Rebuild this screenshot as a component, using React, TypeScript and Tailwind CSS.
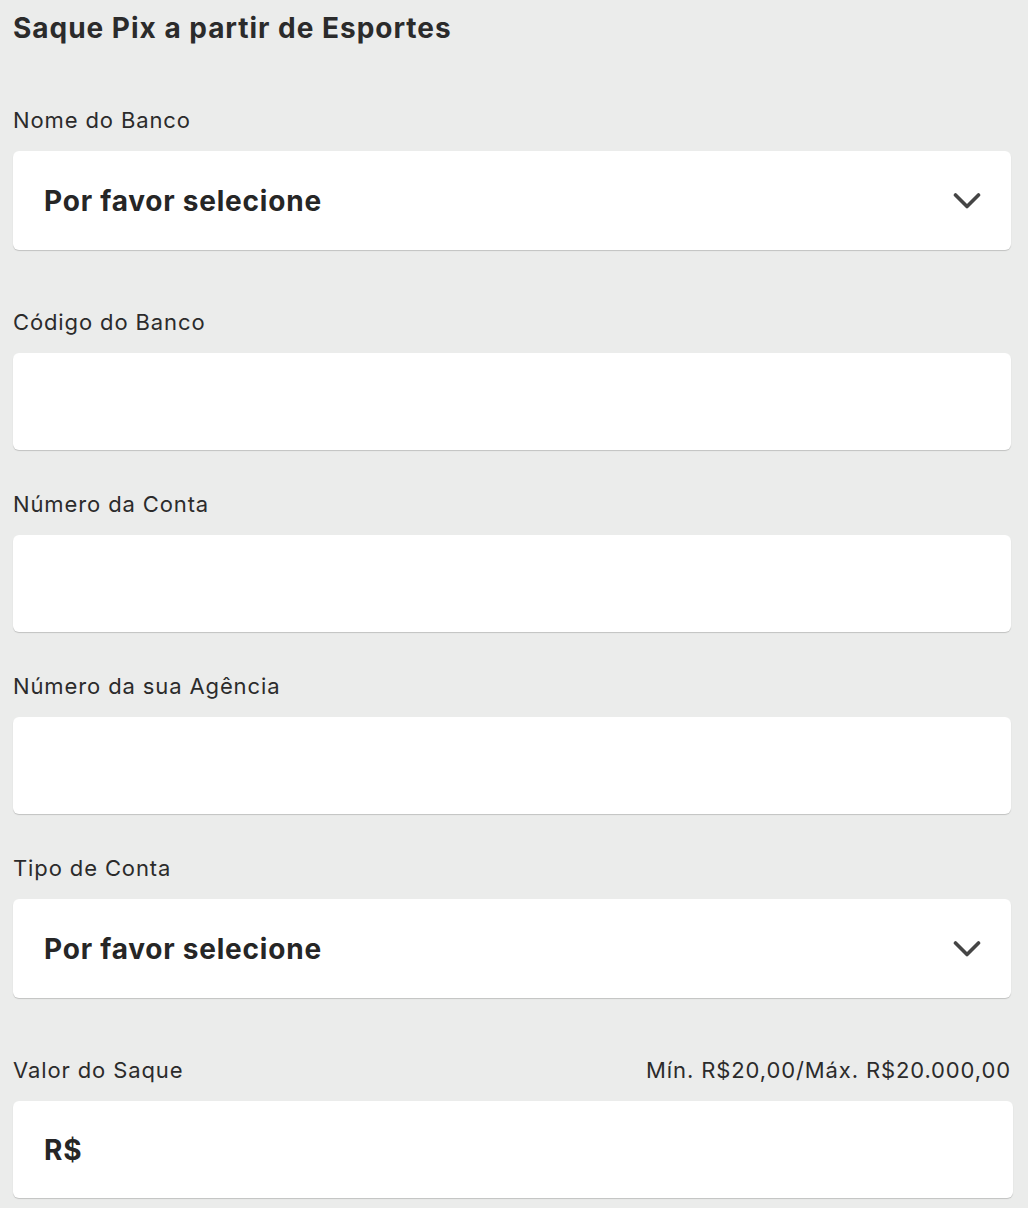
import React from 'react';

function Chevron() {
  return (
    <svg width="28" height="18" viewBox="0 0 28 18" fill="none" className="shrink-0">
      <path d="M2.5 3l11.5 11.5L25.5 3" stroke="#454545" strokeWidth="3.6" strokeLinecap="round" strokeLinejoin="round" />
    </svg>
  );
}

function Label({ children, right, className = '' }: { children: React.ReactNode; right?: string; className?: string }) {
  return (
    <div className={`flex h-[30px] items-center justify-between text-[22px] leading-[30px] tracking-[0.04em] text-[#2b2b2b] ${className}`}>
      <span>{children}</span>
      {right && <span>{right}</span>}
    </div>
  );
}

function SelectBox() {
  return (
    <div className="mt-[16px] flex h-[99px] items-center justify-between rounded-[6px] bg-white pl-[31px] pr-[30px] shadow-[0_1px_1px_rgba(0,0,0,0.18)]">
      <span className="text-[28px] font-bold tracking-[0.028em] text-[#262626]">Por favor selecione</span>
      <Chevron />
    </div>
  );
}

function InputBox({ prefix, className = '' }: { prefix?: string; className?: string }) {
  return (
    <div className={`mt-[16px] flex h-[97px] items-center rounded-[6px] bg-white pl-[31px] shadow-[0_1px_1px_rgba(0,0,0,0.18)] ${className}`}>
      {prefix && <span className="text-[28px] font-bold tracking-[0.028em] text-[#262626]">{prefix}</span>}
    </div>
  );
}

export default function App() {
  return (
    <div className="min-h-[1208px] bg-[#ebeceb] pl-[13px] pr-[17px] pt-[10px] font-['Inter','Noto_Sans',sans-serif]">
      <h1 className="text-[28px] font-bold leading-[36px] tracking-[0.035em] text-[#2b2b2b]">Saque Pix a partir de Esportes</h1>

      <Label className="mt-[59px]">Nome do Banco</Label>
      <SelectBox />

      <Label className="mt-[57px]">Código do Banco</Label>
      <InputBox />

      <Label className="mt-[39px]">Número da Conta</Label>
      <InputBox />

      <Label className="mt-[39px]">Número da sua Agência</Label>
      <InputBox />

      <Label className="mt-[39px]">Tipo de Conta</Label>
      <SelectBox />

      <Label className="mt-[57px]" right="Mín. R$20,00/Máx. R$20.000,00">Valor do Saque</Label>
      <InputBox prefix="R$" className="-mr-[2px]" />
    </div>
  );
}
